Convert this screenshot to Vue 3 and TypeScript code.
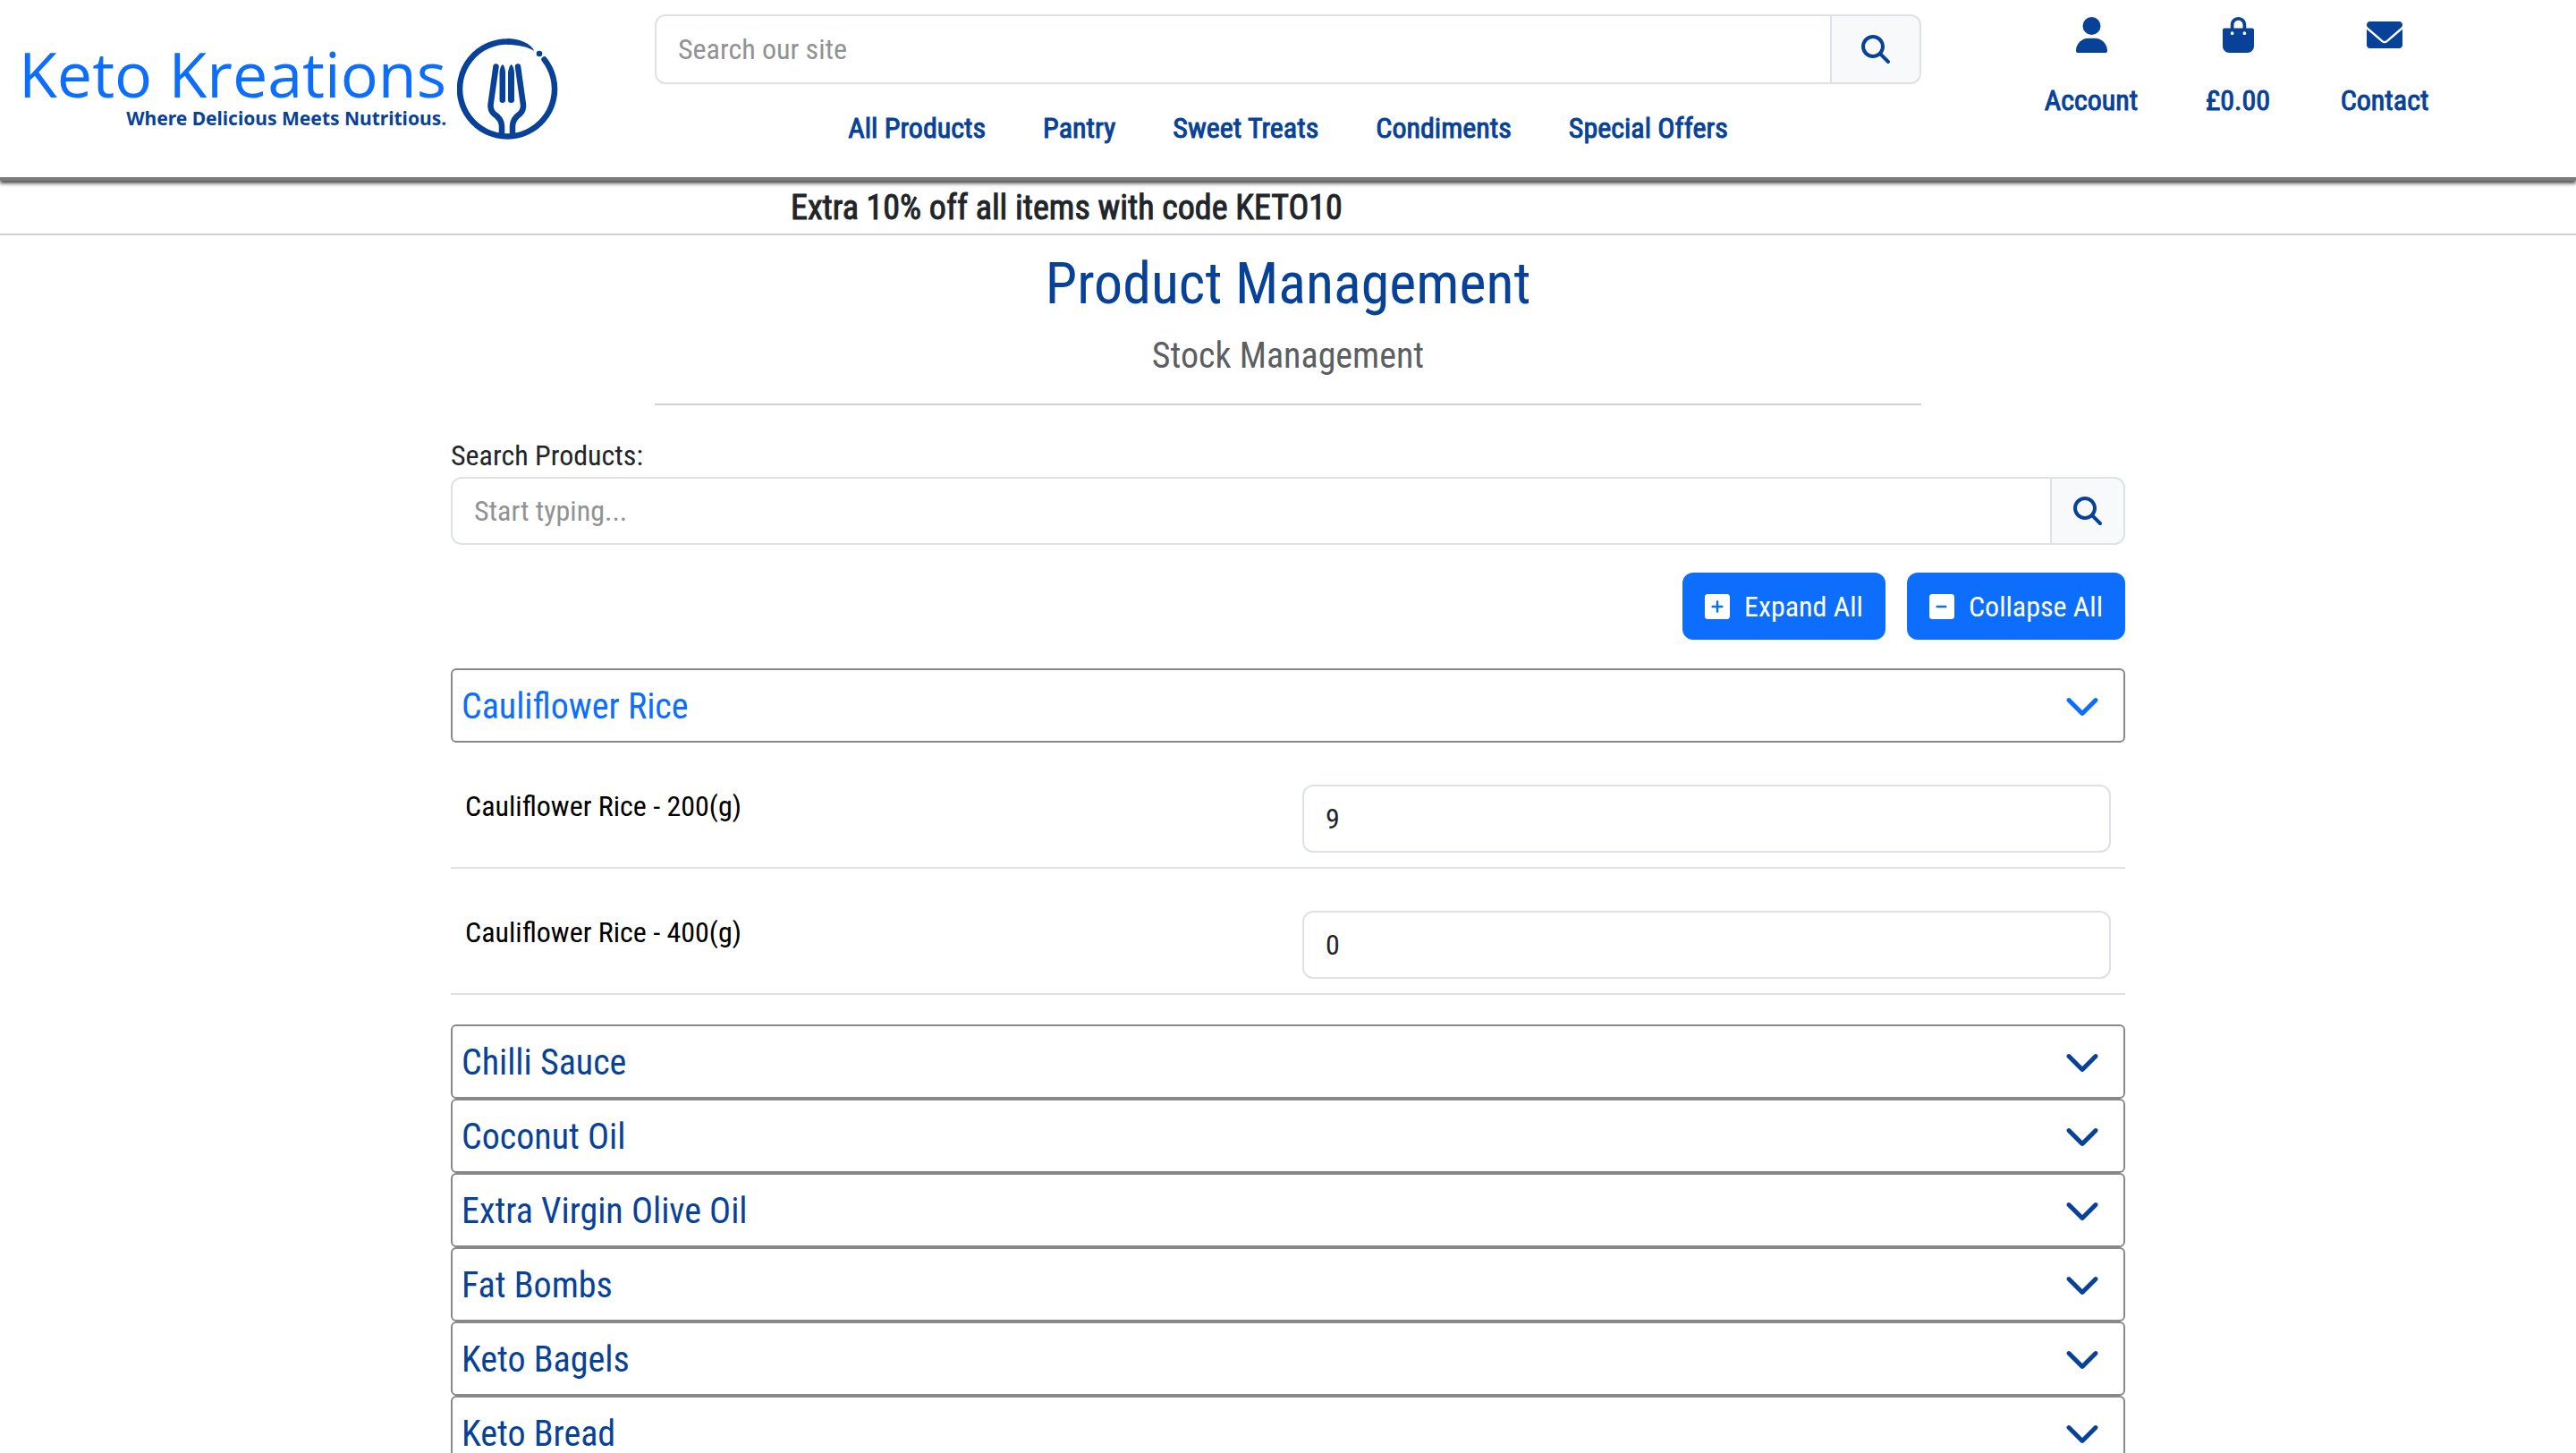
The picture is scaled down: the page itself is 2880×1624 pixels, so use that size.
<script setup lang="ts">
import { ref } from 'vue'

interface Variant {
  id: string
  name: string
  stock: number
}

interface Product {
  name: string
  variants: Variant[]
}

const navLinks: string[] = ['All Products', 'Pantry', 'Sweet Treats', 'Condiments', 'Special Offers']

const products: Product[] = [
  {
    name: 'Cauliflower Rice',
    variants: [
      { id: 'rice-200', name: 'Cauliflower Rice - 200(g)', stock: 9 },
      { id: 'rice-400', name: 'Cauliflower Rice - 400(g)', stock: 0 },
    ],
  },
  { name: 'Chilli Sauce', variants: [] },
  { name: 'Coconut Oil', variants: [] },
  { name: 'Extra Virgin Olive Oil', variants: [] },
  { name: 'Fat Bombs', variants: [] },
  { name: 'Keto Bagels', variants: [] },
  { name: 'Keto Bread', variants: [] },
]

const open = ref<string[]>(['Cauliflower Rice'])

function toggle(name: string): void {
  open.value = open.value.includes(name) ? open.value.filter((n) => n !== name) : [...open.value, name]
}

function expandAll(): void {
  open.value = products.map((p) => p.name)
}

function collapseAll(): void {
  open.value = []
}
</script>

<template>
  <div class="page">
    <header class="header">
      <a class="brand" href="#">
        <span class="brand-text">
          <span class="brand-name">Keto Kreations</span>
          <span class="brand-tag">Where Delicious Meets Nutritious.</span>
        </span>
        <svg class="brand-mark" viewBox="0 0 113 113" fill="none" stroke="currentColor" aria-hidden="true">
          <path d="M56.500 3.500A53 53 0 1 0 97.500 23.500" stroke-width="6.500" stroke-linecap="round" />
          <path d="M56 0C69 0 82 5 86.500 14C78 9 68 7 56 7Z" fill="currentColor" stroke="none" />
          <circle cx="92" cy="17" r="3.300" fill="currentColor" stroke="none" />
          <path d="M43.500 31.500L37.500 74Q37 80 41 84Q50 90 50 98V108" stroke-width="6.500" stroke-linecap="round" />
          <path d="M68 31.500L74 74Q74.500 80 70.500 84Q62 90 62 98V108" stroke-width="6.500" stroke-linecap="round" />
          <path d="M51 29Q53.500 31 54 38V69Q54 72 51 72Q47.500 72 47.500 69V38Q48 31 51 29ZM60.500 29Q63.500 31 64 38V69Q64 72 60.500 72Q57 72 57 69V38Q58 31 60.500 29Z" fill="currentColor" stroke="none" />
        </svg>
      </a>

      <div class="header-mid">
        <form class="search search-site" role="search" @submit.prevent>
          <input type="text" placeholder="Search our site" aria-label="Search our site" />
          <button type="submit" aria-label="Search">
            <svg class="icon-search" viewBox="0 0 512 512" fill="currentColor"><path d="M416 208c0 45.900-14.900 88.300-40 122.700L502.600 457.400c12.500 12.500 12.500 32.800 0 45.300s-32.800 12.500-45.300 0L330.700 376c-34.400 25.200-76.800 40-122.700 40C93.100 416 0 322.900 0 208S93.100 0 208 0S416 93.100 416 208zM208 352a144 144 0 1 0 0-288 144 144 0 1 0 0 288z" /></svg>
          </button>
        </form>
        <nav class="nav">
          <a v-for="link in navLinks" :key="link" href="#">{{ link }}</a>
        </nav>
      </div>

      <ul class="shortcuts">
        <li>
          <a href="#">
            <svg viewBox="0 0 448 512" fill="currentColor"><path d="M224 256A128 128 0 1 0 224 0a128 128 0 1 0 0 256zm-45.700 48C79.800 304 0 383.800 0 482.300C0 498.700 13.300 512 29.700 512H418.300c16.400 0 29.700-13.300 29.700-29.700C448 383.800 368.200 304 269.700 304H178.300z" /></svg>
            <span>Account</span>
          </a>
        </li>
        <li>
          <a href="#">
            <svg viewBox="0 0 448 512" fill="currentColor"><path d="M160 112c0-35.300 28.700-64 64-64s64 28.700 64 64v48H160V112zm-48 48H24c-13.300 0-24 10.700-24 24V416c0 53 43 96 96 96H352c53 0 96-43 96-96V184c0-13.300-10.700-24-24-24H336V112C336 50.100 285.900 0 224 0S112 50.100 112 112v48zm24 48a24 24 0 1 1 0 48 24 24 0 1 1 0-48zm152 24a24 24 0 1 1 48 0 24 24 0 1 1 -48 0z" /></svg>
            <span>£0.00</span>
          </a>
        </li>
        <li>
          <a href="#">
            <svg viewBox="0 0 512 512" fill="currentColor"><path d="M48 64C21.500 64 0 85.500 0 112c0 15.100 7.100 29.300 19.200 38.400L236.800 339.600c11.400 8.500 27 8.500 38.400 0L492.800 150.400c12.100-9.100 19.200-23.300 19.200-38.400c0-26.500-21.500-48-48-48H48zM0 176V400c0 26.500 21.500 48 48 48H464c26.500 0 48-21.500 48-48V176L294.400 361.200c-22.800 17.100-54 17.100-76.800 0L0 176z" /></svg>
            <span>Contact</span>
          </a>
        </li>
      </ul>
    </header>

    <p class="promo">Extra 10% off all items with code KETO10</p>

    <div class="heading">
      <h1>Product Management</h1>
      <h2>Stock Management</h2>
    </div>

    <main class="main">
      <label class="search-label" for="product-search">Search Products:</label>
      <form class="search" @submit.prevent>
        <input id="product-search" type="text" placeholder="Start typing..." />
        <button type="submit" aria-label="Search products">
          <svg class="icon-search" viewBox="0 0 512 512" fill="currentColor"><path d="M416 208c0 45.900-14.900 88.300-40 122.700L502.600 457.400c12.500 12.500 12.500 32.800 0 45.300s-32.800 12.500-45.300 0L330.700 376c-34.400 25.200-76.800 40-122.700 40C93.100 416 0 322.900 0 208S93.100 0 208 0S416 93.100 416 208zM208 352a144 144 0 1 0 0-288 144 144 0 1 0 0 288z" /></svg>
        </button>
      </form>

      <div class="actions">
        <button type="button" @click="expandAll">
          <svg viewBox="0 0 448 512" fill="currentColor"><path d="M48 32C21.500 32 0 53.500 0 80V432c0 26.500 21.500 48 48 48H400c26.500 0 48-21.500 48-48V80c0-26.500-21.500-48-48-48H48zM204 344V276H140c-11 0-20-9-20-20s9-20 20-20h64V168c0-11 9-20 20-20s20 9 20 20v68h64c11 0 20 9 20 20s-9 20-20 20H244v68c0 11-9 20-20 20s-20-9-20-20z" /></svg>
          Expand All
        </button>
        <button type="button" @click="collapseAll">
          <svg viewBox="0 0 448 512" fill="currentColor"><path d="M48 32C21.500 32 0 53.500 0 80V432c0 26.500 21.500 48 48 48H400c26.500 0 48-21.500 48-48V80c0-26.500-21.500-48-48-48H48zM140 236H292c11 0 20 9 20 20s-9 20-20 20H140c-11 0-20-9-20-20s9-20 20-20z" /></svg>
          Collapse All
        </button>
      </div>

      <section v-for="product in products" :key="product.name">
        <button
          type="button"
          class="product"
          :class="{ active: open.includes(product.name) }"
          :aria-expanded="open.includes(product.name)"
          @click="toggle(product.name)"
        >
          {{ product.name }}
          <svg viewBox="0 32 512 512" fill="currentColor"><path d="M233.400 406.600c12.500 12.500 32.800 12.500 45.300 0l192-192c12.500-12.500 12.500-32.800 0-45.300s-32.800-12.500-45.300 0L256 338.700 86.600 169.400c-12.500-12.500-32.800-12.500-45.300 0s-12.500 32.800 0 45.300l192 192z" /></svg>
        </button>
        <table v-if="open.includes(product.name) && product.variants.length" class="stock">
          <tbody>
            <tr v-for="variant in product.variants" :key="variant.id">
              <th scope="row"><label :for="variant.id">{{ variant.name }}</label></th>
              <td><input :id="variant.id" v-model="variant.stock" type="text" inputmode="numeric" /></td>
            </tr>
          </tbody>
        </table>
      </section>
    </main>
  </div>
</template>

<style>
html,
body {
  margin: 0;
  background: #fff;
}
</style>

<style scoped>
.page {
  height: 100vh;
  overflow: hidden;
  color: #212529;
  font-family: 'Roboto Condensed', 'Liberation Sans Narrow', Roboto, sans-serif;
  font-size: 32px;
  line-height: 48px;
}

.page * {
  box-sizing: border-box;
}

a {
  color: inherit;
  text-decoration: none;
}

button,
input {
  font: inherit;
  margin: 0;
}

.header {
  display: grid;
  grid-template-columns: 1fr 2fr 1fr;
  height: 202px;
  border-bottom: 4px solid #7c7c7c;
  box-shadow: 0 3px 4px rgba(0, 0, 0, 0.7);
  color: #084298;
}

.brand {
  display: flex;
  align-items: flex-start;
  gap: 12px;
  padding: 43px 0 0 21px;
}

.brand-text {
  display: flex;
  flex-direction: column;
  align-items: flex-end;
  white-space: nowrap;
}

.brand-name {
  color: #0d6efd;
  font-family: 'Open Sans', sans-serif;
  font-size: 70px;
  line-height: 79px;
}

.brand-tag {
  font-family: 'Noto Sans', sans-serif;
  font-size: 21px;
  font-weight: 700;
  line-height: 20px;
}

.brand-mark {
  flex: none;
  width: 113px;
  height: 113px;
}

.header-mid {
  padding: 16px 12px 0;
}

.search {
  display: flex;
}

.search input {
  flex: 1;
  min-width: 0;
  height: 76px;
  padding: 0 24px;
  border: 2px solid #dee2e6;
  border-radius: 12px 0 0 12px;
  background: #fff;
  color: #212529;
}

.search input::placeholder {
  color: #909294;
  opacity: 1;
}

.search button {
  display: flex;
  align-items: center;
  justify-content: center;
  width: 82px;
  padding: 0;
  border: 2px solid #dee2e6;
  border-left: 0;
  border-radius: 0 12px 12px 0;
  background: #f8f9fa;
  color: #084298;
}

.search-site input {
  height: 78px;
}

.search-site button {
  width: 100px;
}

.icon-search {
  width: 32px;
  height: 32px;
}

.nav {
  display: flex;
  justify-content: center;
  gap: 64px;
  padding-top: 25px;
  -webkit-text-stroke: 1px currentColor;
}

.shortcuts {
  display: grid;
  grid-template-columns: repeat(3, 164px);
  align-content: start;
  margin: 0;
  padding: 19px 0 0 96px;
  list-style: none;
  -webkit-text-stroke: 1px currentColor;
}

.shortcuts a {
  display: flex;
  flex-direction: column;
  align-items: center;
  gap: 29px;
}

.shortcuts svg {
  height: 40px;
}

.promo {
  margin: 0;
  padding: 2px 0 0 884px;
  border-bottom: 2px solid #d0d0d0;
  font-size: 38px;
  line-height: 57px;
  -webkit-text-stroke: 1px currentColor;
}

.heading {
  width: calc(50% - 24px);
  margin: 0 auto;
  padding-bottom: 29px;
  border-bottom: 2px solid #d0d1d2;
  text-align: center;
}

.heading h1 {
  margin: 0;
  padding-top: 16px;
  color: #084298;
  font-size: 64px;
  font-weight: 400;
  line-height: 77px;
}

.heading h2 {
  margin: 0;
  padding-top: 18px;
  color: #5c5f62;
  font-size: 40px;
  font-weight: 400;
  line-height: 48px;
}

.main {
  width: 65%;
  margin: 0 auto;
  padding-top: 32px;
}

.search-label {
  display: block;
}

.actions {
  display: flex;
  justify-content: flex-end;
  gap: 24px;
  padding: 31px 0 32px;
}

.actions button {
  display: flex;
  align-items: center;
  gap: 16px;
  height: 75px;
  padding: 0 25px;
  border: 0;
  border-radius: 12px;
  background: #0d6efd;
  color: #fff;
}

.actions svg {
  height: 32px;
}

.product {
  display: flex;
  align-items: center;
  justify-content: space-between;
  width: 100%;
  height: 83px;
  padding: 2px 26px 0 10px;
  border: 2px solid #888;
  border-radius: 6px;
  background: #fff;
  color: #084298;
  font-size: 40px;
  text-align: left;
}

.product.active {
  color: #0d6efd;
}

.product svg {
  width: 40px;
  height: 40px;
}

.stock {
  width: 100%;
  margin: 0 0 33px;
  border-collapse: collapse;
  table-layout: fixed;
  color: #000;
}

.stock th,
.stock td {
  padding: 47px 16px 16px;
  border-bottom: 2px solid #dee2e6;
  font-weight: 400;
  text-align: left;
  vertical-align: top;
}

.stock th label {
  display: block;
}

.stock input {
  display: block;
  width: 100%;
  height: 76px;
  padding: 0 24px;
  border: 2px solid #dee2e6;
  border-radius: 12px;
  background: #fff;
  color: #212529;
}
</style>
